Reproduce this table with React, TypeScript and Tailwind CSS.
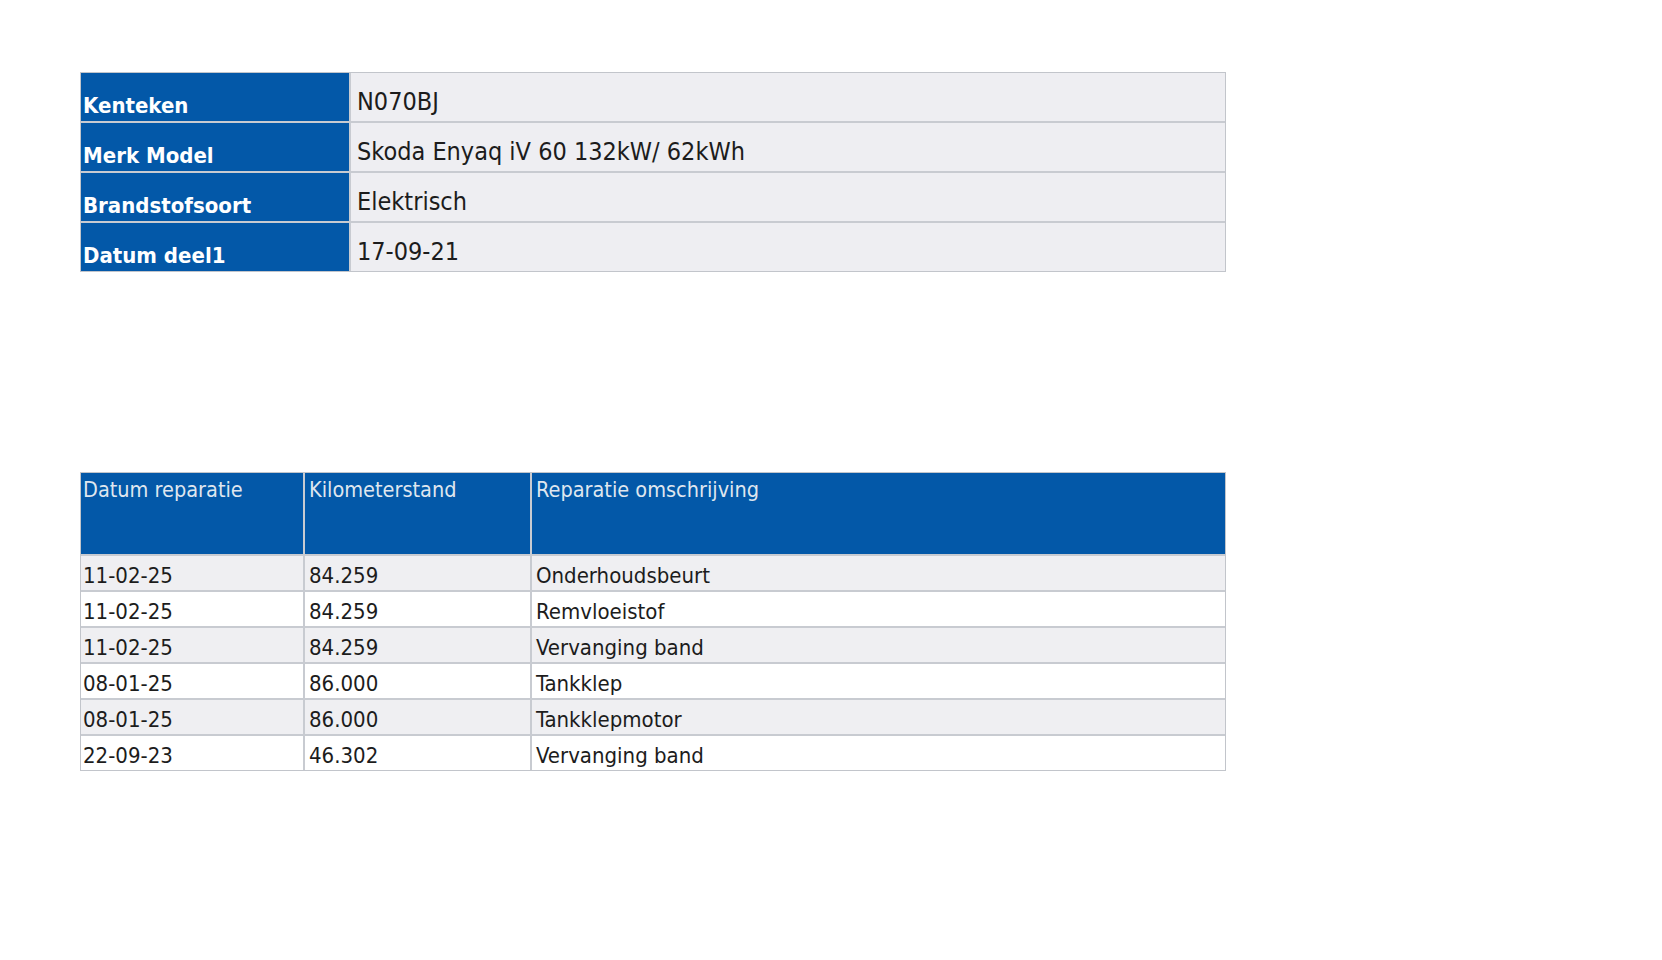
import React from "react";

const font = { fontFamily: '"DejaVu Sans Condensed", "DejaVu Sans", sans-serif' };

const info: [string, string][] = [
  ["Kenteken", "N070BJ"],
  ["Merk Model", "Skoda Enyaq iV 60 132kW/ 62kWh"],
  ["Brandstofsoort", "Elektrisch"],
  ["Datum deel1", "17-09-21"],
];

const repairs: [string, string, string][] = [
  ["11-02-25", "84.259", "Onderhoudsbeurt"],
  ["11-02-25", "84.259", "Remvloeistof"],
  ["11-02-25", "84.259", "Vervanging band"],
  ["08-01-25", "86.000", "Tankklep"],
  ["08-01-25", "86.000", "Tankklepmotor"],
  ["22-09-23", "46.302", "Vervanging band"],
];

export default function App() {
  return (
    <div className="min-h-[960px] w-full bg-white" style={font}>
      <div className="pl-[80px] pt-[72px] w-[1226px]">
        {/* Vehicle info table */}
        <div className="grid grid-cols-[268px_1fr] gap-[2px] border border-[#c2c5cb] bg-[#c8cbd1]">
          {info.map(([label, value]) => (
            <React.Fragment key={label}>
              <div className="h-[48px] bg-[#0358a8] flex items-end pb-[2px] pl-[2px]">
                <span className="text-[22px] leading-[26px] font-bold text-white">{label}</span>
              </div>
              <div className="h-[48px] bg-[#eeeef2] flex items-start pt-[15px] pl-[6px]">
                <span className="text-[25px] leading-[28px] text-[#1c1c1c]">{value}</span>
              </div>
            </React.Fragment>
          ))}
        </div>

        {/* Repairs table */}
        <div className="mt-[200px] grid grid-cols-[222px_225px_1fr] gap-[2px] border border-[#c2c5cb] bg-[#c8cbd1]">
          {["Datum reparatie", "Kilometerstand", "Reparatie omschrijving"].map((h, j) => (
            <div key={h} className={`h-[81px] bg-[#0358a8] pt-[4px] ${j === 0 ? "pl-[2px]" : "pl-[4px]"}`}>
              <span className="text-[21.5px] leading-[25px] text-[#dfe6ef]">{h}</span>
            </div>
          ))}
          {repairs.map((row, i) =>
            row.map((cell, j) => (
              <div
                key={`${i}-${j}`}
                className={`h-[34px] flex items-end pb-[2px] ${j === 0 ? "pl-[2px]" : "pl-[4px]"} ${i % 2 === 0 ? "bg-[#efeff2]" : "bg-white"}`}
              >
                <span className="text-[22px] leading-[25px] text-[#1c1c1c]">{cell}</span>
              </div>
            ))
          )}
        </div>
      </div>
    </div>
  );
}
